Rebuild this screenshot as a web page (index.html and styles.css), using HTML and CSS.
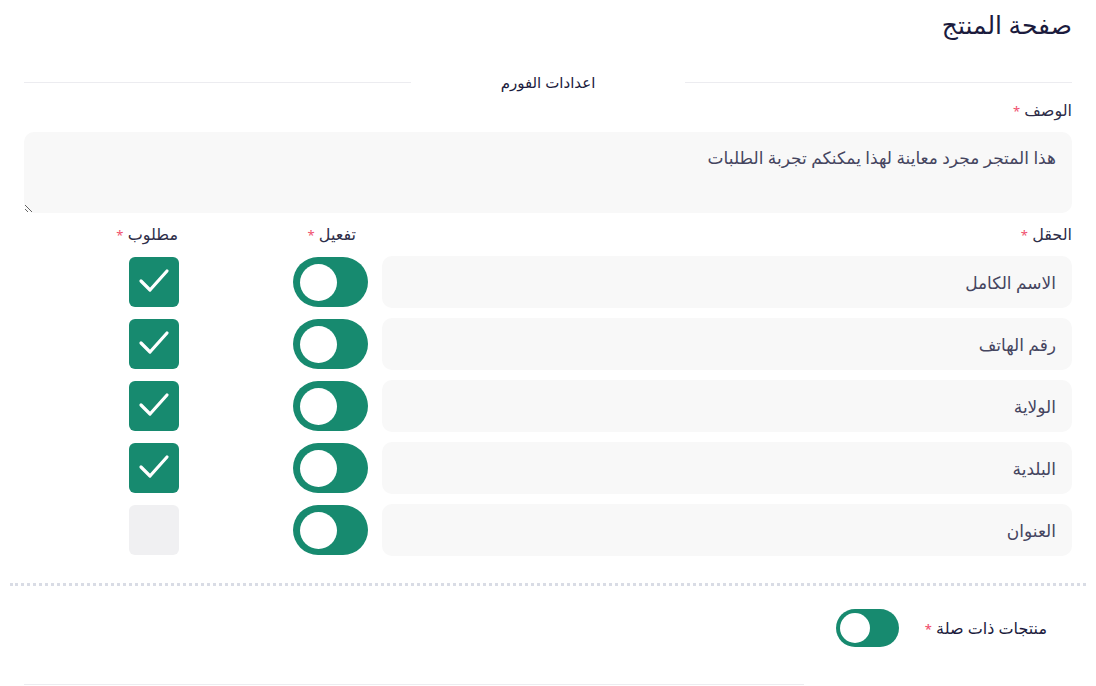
FILE: index.html
```html
<!DOCTYPE html>
<html lang="ar" dir="rtl">
<head>
    <meta charset="utf-8">
    <link rel="stylesheet" href="styles.css">
</head>
<body>
    <div class="page">
        <h1 class="page-title">صفحة المنتج</h1>

        <div class="form-section">
            <div class="divider">
                <span class="divider-line"></span>
                <span class="divider-text">اعدادات الفورم</span>
                <span class="divider-line"></span>
            </div>

            <label class="field-label" for="description">الوصف <span class="req">*</span></label>
            <textarea id="description" class="textarea">هذا المتجر مجرد معاينة لهذا يمكنكم تجربة الطلبات</textarea>

            <div class="fields-grid">
                <div class="col-label">الحقل <span class="req">*</span></div>
                <div class="col-label col-toggle-label">تفعيل <span class="req">*</span></div>
                <div class="col-label col-check-label">مطلوب <span class="req">*</span></div>

                <div class="field-box">الاسم الكامل</div>
                <div class="toggle-cell"><span class="toggle"><span class="knob"></span></span></div>
                <div class="check-cell"><span class="check on"><svg viewBox="0 0 50 50"><polyline points="12,24 21,33 38,14"/></svg></span></div>

                <div class="field-box">رقم الهاتف</div>
                <div class="toggle-cell"><span class="toggle"><span class="knob"></span></span></div>
                <div class="check-cell"><span class="check on"><svg viewBox="0 0 50 50"><polyline points="12,24 21,33 38,14"/></svg></span></div>

                <div class="field-box">الولاية</div>
                <div class="toggle-cell"><span class="toggle"><span class="knob"></span></span></div>
                <div class="check-cell"><span class="check on"><svg viewBox="0 0 50 50"><polyline points="12,24 21,33 38,14"/></svg></span></div>

                <div class="field-box">البلدية</div>
                <div class="toggle-cell"><span class="toggle"><span class="knob"></span></span></div>
                <div class="check-cell"><span class="check on"><svg viewBox="0 0 50 50"><polyline points="12,24 21,33 38,14"/></svg></span></div>

                <div class="field-box">العنوان</div>
                <div class="toggle-cell"><span class="toggle"><span class="knob"></span></span></div>
                <div class="check-cell"><span class="check"></span></div>
            </div>
        </div>

        <div class="dotted"></div>

        <div class="related">
            <span class="related-label">منتجات ذات صلة <span class="req">*</span></span>
            <span class="toggle small"><span class="knob"></span></span>
        </div>

        <div class="bottom-line"></div>
    </div>
</body>
</html>
```

FILE: styles.css
```css
body {
    font-family: "Noto Sans", "DejaVu Sans", sans-serif;
    background-color: #fff;
    color: #45455f;
    margin: 0;
    padding: 0;
}

.page {
    padding: 0 10px 0 10px;
}

.page-title {
    margin: 0;
    padding: 8px 14px 0 0;
    font-size: 25px;
    font-weight: 400;
    line-height: 32px;
    color: #1b1b3d;
}

.form-section {
    padding: 0 14px;
}

.divider {
    display: flex;
    align-items: center;
    margin-top: 25px;
    height: 34px;
}

.divider-line {
    flex: 1;
    height: 1px;
    background-color: #ececf0;
}

.divider-text {
    width: 274px;
    text-align: center;
    font-size: 15px;
    font-weight: 500;
    color: #1b1b3d;
}

.field-label {
    display: block;
    font-size: 16px;
    line-height: 22px;
    margin-top: 0;
    color: #2d2d48;
}

.req {
    color: #f0506e;
    font-size: 13px;
}

.textarea {
    display: block;
    box-sizing: border-box;
    width: 100%;
    height: 81px;
    margin-top: 10px;
    padding: 14px 16px;
    border: none;
    border-radius: 10px;
    background-color: #f8f8f8;
    font-family: inherit;
    font-size: 17px;
    color: #45455f;
    resize: vertical;
    outline: none;
}

.fields-grid {
    display: grid;
    grid-template-columns: 1fr 164px 164px;
    column-gap: 15px;
    row-gap: 10px;
    margin-top: 10px;
}

.col-label {
    font-size: 16px;
    line-height: 22px;
    color: #2d2d48;
}

.col-toggle-label {
    padding-right: 11px;
}

.col-check-label {
    padding-right: 10px;
}

.field-box {
    height: 52px;
    box-sizing: border-box;
    padding: 0 16px;
    display: flex;
    align-items: center;
    background-color: #f8f8f8;
    border-radius: 10px;
    font-size: 17px;
    color: #45455f;
}

.toggle-cell,
.check-cell {
    display: flex;
    align-items: center;
}

.toggle-cell {
    margin-right: -1px;
}

.check-cell {
    padding-right: 9px;
}

.toggle {
    position: relative;
    display: inline-block;
    width: 75px;
    height: 50px;
    border-radius: 25px;
    background-color: #178a6f;
}

.toggle .knob {
    position: absolute;
    left: 7px;
    top: 6.5px;
    width: 37px;
    height: 37px;
    border-radius: 50%;
    background-color: #fff;
}

.toggle.small {
    width: 63px;
    height: 38px;
    border-radius: 19px;
}

.toggle.small .knob {
    left: 4px;
    top: 4px;
    width: 30px;
    height: 30px;
}

.check {
    display: block;
    width: 50px;
    height: 50px;
    border-radius: 6px;
    background-color: #f0f0f2;
}

.check.on {
    background-color: #178a6f;
}

.check svg {
    width: 50px;
    height: 50px;
    fill: none;
    stroke: #fff;
    stroke-width: 3.2;
    stroke-linecap: round;
    stroke-linejoin: round;
}

.dotted {
    margin-top: 27px;
    border-top: 3px dotted #d9dce5;
}

.related {
    display: flex;
    align-items: center;
    gap: 30px;
    padding-right: 39px;
    margin-top: 23px;
}

.related-label {
    width: 118px;
    font-size: 16px;
    font-weight: 500;
    color: #1b1b3d;
    white-space: nowrap;
}

.bottom-line {
    margin: 37px 282px 0 14px;
    height: 1px;
    background-color: #ececf0;
}
```
